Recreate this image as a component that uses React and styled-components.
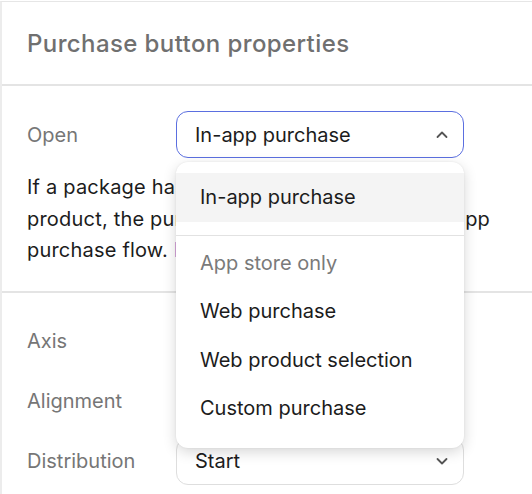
import React from "react";
import styled, { createGlobalStyle } from "styled-components";

const Global = createGlobalStyle`
  html, body { margin: 0; padding: 0; background: #fff; }
  body { font-family: Inter, "Noto Sans", sans-serif; -webkit-font-smoothing: antialiased; }
  * { box-sizing: border-box; }
`;

const Panel = styled.div`
  width: 532px;
  height: 494px;
  margin-top: 1px;
  border-top: 1px solid #e6e6e6;
  border-left: 2px solid #ececec;
  overflow: hidden;
  position: relative;
`;

const Header = styled.div`
  height: 84px;
  display: flex;
  align-items: center;
  padding-left: 25px;
  border-bottom: 2px solid #e4e4e4;
  font-size: 24px;
  font-weight: 500;
  color: #707070;
  letter-spacing: 0.4px;
`;

const Section = styled.div`
  padding: ${(p) => p.$pad};
  border-bottom: ${(p) => (p.$divider ? "2px solid #e4e4e4" : "none")};
  display: flex;
  flex-direction: column;
  gap: ${(p) => p.$gap || "13px"};
`;

const Row = styled.div`
  display: grid;
  grid-template-columns: 149px 288px;
  align-items: center;
`;

const Label = styled.div`
  font-size: 20px;
  color: #767676;
`;

const SelectWrap = styled.div`
  position: relative;
`;

const Select = styled.div`
  height: 47px;
  border-radius: 12px;
  border: 1px solid ${(p) => (p.$open ? "#5b6fe0" : "#dedede")};
  display: flex;
  align-items: center;
  justify-content: space-between;
  padding: 0 14px 0 18px;
  font-size: 20px;
  color: #1c1c1c;
  background: #fff;
`;

const Description = styled.p`
  margin: 0;
  font-size: 20px;
  line-height: 31.5px;
  letter-spacing: 0.2px;
  color: #1c1c1c;
  white-space: nowrap;
`;

const Link = styled.a`
  color: #4a63d8;
  text-decoration: none;
`;

const Menu = styled.div`
  position: absolute;
  top: 51px;
  left: 0;
  width: 288px;
  background: #fff;
  border-radius: 12px;
  box-shadow: 0 4px 14px rgba(0, 0, 0, 0.16), 0 0 2px rgba(0, 0, 0, 0.08);
  padding: 11px 0 15px;
  z-index: 10;
`;

const Item = styled.div`
  height: 48.5px;
  display: flex;
  align-items: center;
  padding-left: 24px;
  font-size: 20px;
  color: ${(p) => (p.$disabled ? "#7a7a7a" : "#1c1c1c")};
  background: ${(p) => (p.$active ? "#f4f4f4" : "transparent")};
`;

const Divider = styled.div`
  height: 1px;
  background: #e2e2e2;
  margin: 13px 0 3px;
`;

const Chevron = ({ up }) => (
  <svg width="14" height="14" viewBox="0 0 14 14" fill="none">
    <path
      d={up ? "M2.5 9 L7 4.5 L11.5 9" : "M2.5 5 L7 9.5 L11.5 5"}
      stroke="#555"
      strokeWidth="1.8"
      strokeLinecap="round"
      strokeLinejoin="round"
    />
  </svg>
);

const options = [
  { label: "In-app purchase", active: true },
  { divider: true },
  { label: "App store only", disabled: true },
  { label: "Web purchase" },
  { label: "Web product selection" },
  { label: "Custom purchase" },
];

export default function App() {
  return (
    <>
      <Global />
      <Panel>
        <Header>Purchase button properties</Header>
        <Section $divider $gap="14px" $pad="25px 27px 24px 25px">
          <Row>
            <Label>Open</Label>
            <SelectWrap>
              <Select $open>
                <span>In-app purchase</span>
                <Chevron up />
              </Select>
              <Menu>
                {options.map((o, i) =>
                  o.divider ? (
                    <Divider key={i} />
                  ) : (
                    <Item key={i} $active={o.active} $disabled={o.disabled}>
                      {o.label}
                    </Item>
                  )
                )}
              </Menu>
            </SelectWrap>
          </Row>
          <Description>
            If a package has a web and app store
            <br />
            product, the purchase button will use the in-app
            <br />
            purchase flow. <Link href="#">Learn more</Link>
          </Description>
        </Section>
        <Section $gap="13px" $pad="25px 27px 0 25px">
          <Row>
            <Label>Axis</Label>
            <Select>
              <span>Vertical</span>
              <Chevron />
            </Select>
          </Row>
          <Row>
            <Label>Alignment</Label>
            <Select>
              <span>Center</span>
              <Chevron />
            </Select>
          </Row>
          <Row>
            <Label>Distribution</Label>
            <Select>
              <span>Start</span>
              <Chevron />
            </Select>
          </Row>
        </Section>
      </Panel>
    </>
  );
}
